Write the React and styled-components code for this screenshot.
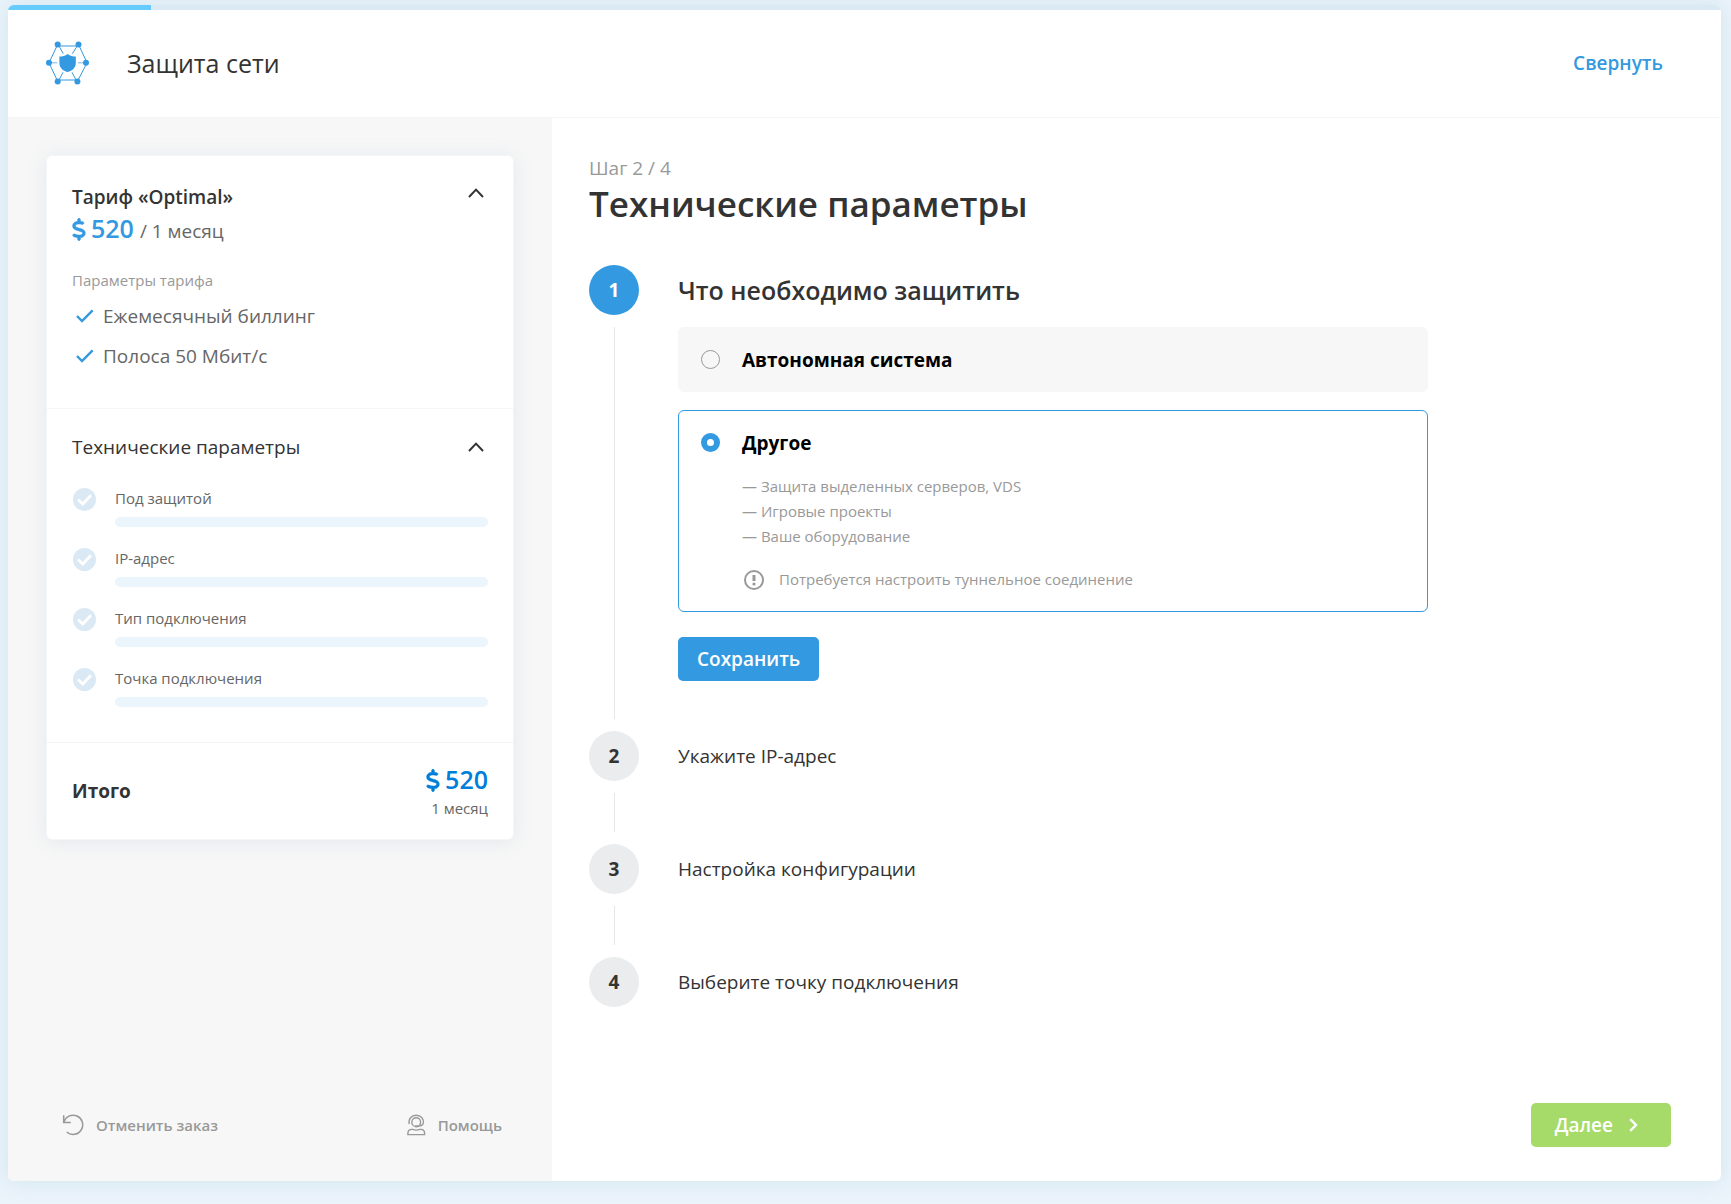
// App.jsx

import React, { useState } from 'react';
import styled, { createGlobalStyle } from 'styled-components';
import { FaDollarSign } from 'react-icons/fa6';

const GlobalStyle = createGlobalStyle`
  * {
    box-sizing: border-box;
  }

  body {
    margin: 0;
    background: #ebf3fb;
    color: #333;
    font-family: 'Open Sans', 'Noto Sans', sans-serif;
    font-size: 19px;
    line-height: 26px;
  }

  h1, h2, h3, p, ul, ol {
    margin: 0;
    padding: 0;
    font-size: inherit;
    font-weight: 400;
  }

  ul, ol {
    list-style: none;
  }

  button {
    padding: 0;
    border: none;
    background: none;
    color: inherit;
    font: inherit;
    cursor: pointer;
  }
`;

const Page = styled.div`
  display: flex;
  min-height: 100vh;
  padding: 5px 10px 23px 8px;
`;

const Window = styled.div`
  display: flex;
  flex: 1;
  flex-direction: column;
  overflow: hidden;
  border-radius: 6px;
  background: #fff;
  box-shadow: 0 0 20px rgba(150, 200, 205, 0.3);
`;

const Progress = styled.div`
  height: 5px;
  background: #dbe9f4;
`;

const ProgressBar = styled.div`
  height: 100%;
  background: #66ccff;
`;

const Header = styled.header`
  display: flex;
  align-items: center;
  height: 108px;
  padding: 0 58px 2px 38px;
  border-bottom: 1px solid #f6f6f6;
`;

const ServiceName = styled.h2`
  flex: 1;
  margin-left: 37px;
  font-size: 25px;
  line-height: 34px;
`;

const CollapseButton = styled.button`
  color: #3399e0;
  font-weight: 600;
`;

const Body = styled.div`
  display: flex;
  flex: 1;
`;

const Sidebar = styled.aside`
  display: flex;
  flex: 0 0 544px;
  flex-direction: column;
  justify-content: space-between;
  padding: 37px 38px 43px;
  background: #f7f7f7;
`;

const Card = styled.section`
  border: 1px solid #f4f5f6;
  border-radius: 6px;
  background: #fff;
  box-shadow: 0 2px 20px rgba(120, 150, 180, 0.15);
`;

const CardSection = styled.div`
  padding: 28px 25px 32px;

  & + & {
    padding: 25px 25px 35px;
    border-top: 1px solid #f4f5f6;
  }
`;

const CardHead = styled.div`
  display: flex;
  align-items: ${(props) => props.$align};
  justify-content: space-between;
`;

const CardTitle = styled.h3`
  font-weight: ${(props) => (props.$strong ? 600 : 400)};
`;

const ToggleButton = styled.button`
  display: flex;
  align-items: center;
  height: 18px;
  padding: 0 4px;
  color: #333;
`;

const PriceLine = styled.p`
  display: flex;
  align-items: baseline;
  gap: 6px;
  margin-bottom: 22px;
  padding-top: 1px;
  color: #666;
  line-height: 34px;
`;

const Price = styled.span`
  color: ${(props) => (props.$total ? '#007fd9' : '#3399e0')};
  font-size: 25px;
  font-weight: 600;
  line-height: 34px;
  white-space: nowrap;

  svg {
    width: 14px;
    height: 23px;
    margin-right: 5px;
    overflow: visible;
    stroke-width: 12px;
    vertical-align: -3px;
  }
`;

const SmallText = styled.p`
  color: ${(props) => (props.$dark ? '#666' : '#999')};
  font-size: 15px;
  line-height: 20px;
`;

const FeatureList = styled.ul`
  padding-top: 6px;
  color: #666;
`;

const Feature = styled.li`
  display: flex;
  align-items: center;
  gap: 9px;
  height: 40px;
  padding-left: 4px;
`;

const ParamList = styled.ul`
  display: flex;
  flex-direction: column;
  gap: 21px;
  padding: 28px 0 0 1px;
`;

const Param = styled.li`
  display: flex;
  gap: 19px;
`;

const ParamBody = styled.div`
  flex: 1;
`;

const Placeholder = styled.div`
  height: 10px;
  margin-top: 9px;
  border-radius: 5px;
  background: #eaf5fc;
`;

const Total = styled.div`
  display: flex;
  align-items: center;
  justify-content: space-between;
  height: 97px;
  padding: 0 25px;
  border-top: 1px solid #f4f5f6;
`;

const TotalLabel = styled.span`
  font-weight: 700;
`;

const TotalSum = styled.div`
  display: flex;
  flex-direction: column;
  align-items: flex-end;
  gap: 2px;
  padding-bottom: 2px;
`;

const SidebarFooter = styled.div`
  display: flex;
  justify-content: space-between;
  padding: 0 12px 0 16px;
`;

const FooterButton = styled.button`
  display: flex;
  align-items: center;
  gap: 12px;
  color: #999;
  font-size: 15px;
  font-weight: 600;
  line-height: 26px;
`;

const Main = styled.main`
  display: flex;
  flex: 1;
  flex-direction: column;
  padding: 37px 50px 34px 37px;
`;

const StepCounter = styled.p`
  color: #999;
`;

const PageTitle = styled.h1`
  margin-bottom: 38px;
  font-size: 35px;
  font-weight: 600;
  line-height: 46px;
`;

const Steps = styled.ol`
  flex: 1;
`;

const Step = styled.li`
  display: flex;
  gap: 39px;
`;

const Rail = styled.div`
  display: flex;
  flex-direction: column;
  align-items: center;
`;

const StepNumber = styled.span`
  display: flex;
  align-items: center;
  justify-content: center;
  width: 50px;
  height: 50px;
  border-radius: 50%;
  background: ${(props) => (props.$active ? '#3399e0' : '#ebecee')};
  color: ${(props) => (props.$active ? '#fff' : '#333')};
  font-weight: 700;
`;

const RailLine = styled.span`
  flex: 1;
  width: 1px;
  min-height: 39px;
  margin: 12px 0;
  background: #e6e6e6;
`;

const StepContent = styled.div`
  flex: 1;
  max-width: 750px;
`;

const StepTitle = styled.h2`
  display: flex;
  align-items: center;
  height: 50px;
  font-size: ${(props) => (props.$active ? '25px' : '19px')};
  font-weight: ${(props) => (props.$active ? 600 : 400)};
`;

const StepForm = styled.form`
  padding: 12px 0 50px;
`;

const Option = styled.label`
  display: flex;
  gap: 22px;
  margin-bottom: 18px;
  padding: 19px 22px 18px;
  border: 1px solid ${(props) => (props.$checked ? '#3399e0' : '#f7f7f7')};
  border-radius: 6px;
  background: ${(props) => (props.$checked ? '#fff' : '#f7f7f7')};
  color: #000;
  cursor: pointer;
`;

const Radio = styled.input`
  appearance: none;
  width: 19px;
  height: 19px;
  margin: 3px 0 0;
  border: 1px solid #999;
  border-radius: 50%;

  &:checked {
    border: 6px solid #3399e0;
  }
`;

const OptionTitle = styled.strong`
  display: block;
  font-weight: 700;
`;

const OptionDetails = styled.div`
  padding: 18px 0 1px;
  color: #999;
  font-size: 15px;
  line-height: 25px;
`;

const Notice = styled.p`
  display: flex;
  align-items: center;
  gap: 15px;
  margin-top: 18px;
  padding-left: 2px;
`;

const SaveButton = styled.button`
  height: 44px;
  margin-top: 7px;
  padding: 0 19px;
  border-radius: 5px;
  background: #3399e0;
  color: #fff;
  font-weight: 600;
`;

const NextButton = styled.button`
  display: flex;
  align-items: center;
  align-self: flex-end;
  gap: 16px;
  height: 44px;
  padding: 0 33px 0 24px;
  border-radius: 5px;
  background: #a6db6a;
  color: #fff;
  font-weight: 600;
`;

const LogoIcon = () => (
  <svg width="44" height="44" viewBox="0 0 44 44" fill="none" stroke="#3399e0">
    <path d="M13 5H31M13 39H31M11.7 3.4L3 21.8L11.7 40.4M32.5 3.4L41 21.8L31.4 40.4" />
    <path d="M13 5L17.3 12.7M31.2 5L26.3 12.7M13 39L17 31.3M30 39L26 31.3" />
    <path d="M5.5 21.8H11.3M32 21.8H38" opacity="0.7" />
    <path
      d="M21.6 13C24 14.8 26.8 15.5 29.8 15.6V22C29.8 26.6 26.4 30 21.6 31C16.8 30 13.4 26.6 13.4 22V15.6C16.4 15.5 19.2 14.8 21.6 13Z"
      fill="#3399e0"
      stroke="none"
    />
    <g fill="#3399e0" stroke="none">
      <circle cx="11.7" cy="3.4" r="3" />
      <circle cx="32.5" cy="3.4" r="3" />
      <circle cx="3" cy="21.8" r="3" />
      <circle cx="40" cy="21.8" r="3" />
      <circle cx="11.7" cy="40.4" r="3" />
      <circle cx="31.4" cy="40.4" r="3" />
    </g>
  </svg>
);

const ChevronUp = () => (
  <svg width="16" height="10" viewBox="0 0 16 10" fill="none" stroke="currentColor" strokeWidth="2">
    <path d="M1 9L8 1.6L15 9" />
  </svg>
);

const ChevronRight = () => (
  <svg width="9" height="14" viewBox="0 0 9 14" fill="none" stroke="currentColor" strokeWidth="2.4">
    <path d="M1.2 1.2L7 7L1.2 12.8" />
  </svg>
);

const CheckIcon = () => (
  <svg width="18" height="14" viewBox="0 0 18 14" fill="none" stroke="#3399e0" strokeWidth="2.4">
    <path d="M1 7L6 12L16.6 1.4" />
  </svg>
);

const CheckCircle = () => (
  <svg width="23" height="23" viewBox="0 0 23 23" fill="none">
    <circle cx="11.5" cy="11.5" r="11.5" fill="#dbe9f4" />
    <path d="M5 11.5L9.7 16L18 7.2" stroke="#fff" strokeWidth="2.8" />
  </svg>
);

const NoticeIcon = () => (
  <svg width="20" height="20" viewBox="0 0 20 20" fill="none" stroke="#999" strokeWidth="2">
    <circle cx="10" cy="10" r="9" />
    <path d="M10 5V11" strokeWidth="3" />
    <circle cx="10" cy="14" r="1.6" fill="#999" stroke="none" />
  </svg>
);

const UndoIcon = () => (
  <svg width="22" height="22" viewBox="0 0 22 22" fill="none" stroke="currentColor" strokeWidth="1.5">
    <path d="M1.7 1.2V8.4H8.8" />
    <path d="M1.8 8.4A9.6 9.6 0 1 1 4.7 18" />
  </svg>
);

const SupportIcon = () => (
  <svg width="20" height="22" viewBox="0 0 20 22" fill="none" stroke="currentColor" strokeWidth="1.4">
    <path d="M3.2 10.2C2.2 5 5.4 1.3 10.2 1.3C15 1.3 18.2 5 17.3 9.2C16.9 11.3 14.8 12.3 11.6 12.2" />
    <circle cx="10.2" cy="8.2" r="4.4" />
    <path d="M9 12.3H12" strokeWidth="2" />
    <path d="M1.9 20.6V18.8C2.2 16.4 4.2 15.1 6.6 15.4C9 16.3 11.6 16.3 14 15.4C16.4 15.1 18.3 16.4 18.6 18.8V20.6Z" />
  </svg>
);

const features = ['Ежемесячный биллинг', 'Полоса 50 Мбит/с'];

const params = ['Под защитой', 'IP-адрес', 'Тип подключения', 'Точка подключения'];

const nextSteps = ['Укажите IP-адрес', 'Настройка конфигурации', 'Выберите точку подключения'];

const App = () => {
  const [target, setTarget] = useState('other');
  const [tariffOpen, setTariffOpen] = useState(true);
  const [paramsOpen, setParamsOpen] = useState(true);
  const progress = 8.35;

  return (
    <Page>
      <GlobalStyle />
      <Window>
        <Progress>
          <ProgressBar style={{ width: `${progress}%` }} />
        </Progress>

        <Header>
          <LogoIcon />
          <ServiceName>Защита сети</ServiceName>
          <CollapseButton type="button">Свернуть</CollapseButton>
        </Header>

        <Body>
          <Sidebar>
            <Card>
              <CardSection>
                <CardHead $align="flex-start">
                  <CardTitle $strong>Тариф «Optimal»</CardTitle>
                  <ToggleButton
                    type="button"
                    aria-label="Тариф"
                    aria-expanded={tariffOpen}
                    onClick={() => setTariffOpen(!tariffOpen)}
                  >
                    <ChevronUp />
                  </ToggleButton>
                </CardHead>
                <PriceLine>
                  <Price>
                    <FaDollarSign />
                    520
                  </Price>
                  / 1 месяц
                </PriceLine>
                {tariffOpen && (
                  <>
                    <SmallText>Параметры тарифа</SmallText>
                    <FeatureList>
                      {features.map((feature) => (
                        <Feature key={feature}>
                          <CheckIcon />
                          {feature}
                        </Feature>
                      ))}
                    </FeatureList>
                  </>
                )}
              </CardSection>

              <CardSection>
                <CardHead $align="center">
                  <CardTitle>Технические параметры</CardTitle>
                  <ToggleButton
                    type="button"
                    aria-label="Технические параметры"
                    aria-expanded={paramsOpen}
                    onClick={() => setParamsOpen(!paramsOpen)}
                  >
                    <ChevronUp />
                  </ToggleButton>
                </CardHead>
                {paramsOpen && (
                  <ParamList>
                    {params.map((param) => (
                      <Param key={param}>
                        <CheckCircle />
                        <ParamBody>
                          <SmallText $dark>{param}</SmallText>
                          <Placeholder />
                        </ParamBody>
                      </Param>
                    ))}
                  </ParamList>
                )}
              </CardSection>

              <Total>
                <TotalLabel>Итого</TotalLabel>
                <TotalSum>
                  <Price $total>
                    <FaDollarSign />
                    520
                  </Price>
                  <SmallText $dark>1 месяц</SmallText>
                </TotalSum>
              </Total>
            </Card>

            <SidebarFooter>
              <FooterButton type="button">
                <UndoIcon />
                Отменить заказ
              </FooterButton>
              <FooterButton type="button">
                <SupportIcon />
                Помощь
              </FooterButton>
            </SidebarFooter>
          </Sidebar>

          <Main>
            <StepCounter>Шаг 2 / 4</StepCounter>
            <PageTitle>Технические параметры</PageTitle>

            <Steps>
              <Step>
                <Rail>
                  <StepNumber $active>1</StepNumber>
                  <RailLine />
                </Rail>
                <StepContent>
                  <StepTitle $active>Что необходимо защитить</StepTitle>
                  <StepForm onSubmit={(e) => e.preventDefault()}>
                    <Option $checked={target === 'as'}>
                      <Radio
                        type="radio"
                        name="target"
                        checked={target === 'as'}
                        onChange={() => setTarget('as')}
                      />
                      <OptionTitle>Автономная система</OptionTitle>
                    </Option>
                    <Option $checked={target === 'other'}>
                      <Radio
                        type="radio"
                        name="target"
                        checked={target === 'other'}
                        onChange={() => setTarget('other')}
                      />
                      <div>
                        <OptionTitle>Другое</OptionTitle>
                        <OptionDetails>
                          <p>— Защита выделенных серверов, VDS</p>
                          <p>— Игровые проекты</p>
                          <p>— Ваше оборудование</p>
                          <Notice>
                            <NoticeIcon />
                            Потребуется настроить туннельное соединение
                          </Notice>
                        </OptionDetails>
                      </div>
                    </Option>
                    <SaveButton type="submit">Сохранить</SaveButton>
                  </StepForm>
                </StepContent>
              </Step>

              {nextSteps.map((title, index) => (
                <Step key={title}>
                  <Rail>
                    <StepNumber>{index + 2}</StepNumber>
                    {index < nextSteps.length - 1 && <RailLine />}
                  </Rail>
                  <StepTitle>{title}</StepTitle>
                </Step>
              ))}
            </Steps>

            <NextButton type="button">
              Далее
              <ChevronRight />
            </NextButton>
          </Main>
        </Body>
      </Window>
    </Page>
  );
};

export default App;
